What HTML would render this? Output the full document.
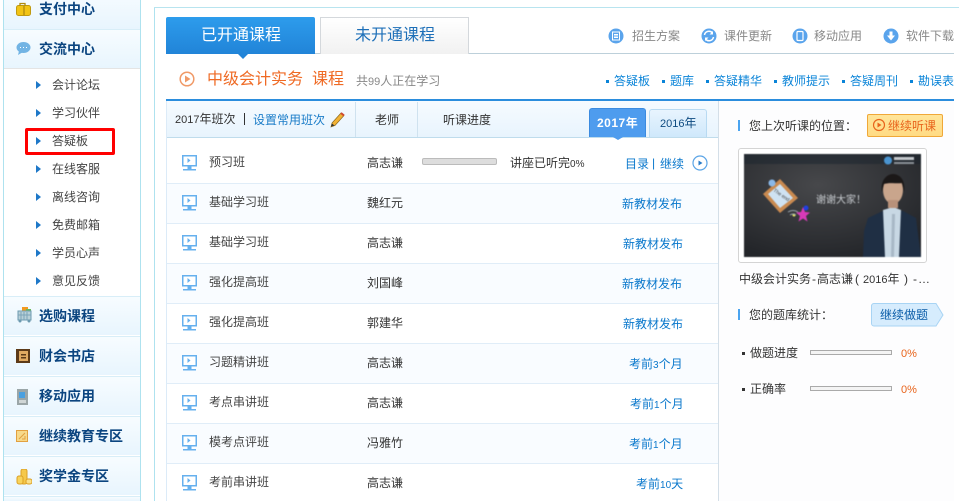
<!DOCTYPE html>
<html lang="zh"><head><meta charset="utf-8"><title>课程</title>
<style>
html,body{margin:0;padding:0;background:#fff}
#p{position:relative;width:959px;height:501px;overflow:hidden;background:#fff;font:12px/14px "Liberation Sans","WenQuanYi Zen Hei","Noto Sans CJK SC",sans-serif;color:#333}
#p div,#p span.t,#p svg{position:absolute}
.t{position:absolute;white-space:nowrap;line-height:14px}
.d{font-style:normal;font-size:11px}
.h{left:4px;width:136px;height:38px;background:linear-gradient(#f7fcff,#e8f5fe);border-top:1px solid #d8eef8}
.ht{left:39px;font-size:14px;font-weight:bold;color:#0b4580;line-height:16px}
.m{left:52px;color:#444}
.a{width:0;height:0;left:36px;border-left:5px solid #1e78c8;border-top:4px solid transparent;border-bottom:4px solid transparent}
.r{left:167px;width:551px;height:39px;border-bottom:1px solid #e0edf8}
.alt{background:#f9fcff}
.n{left:209px;color:#444}.te{left:367px;color:#333}.l{color:#0a78cc}
.q{color:#0a84d8}.s{width:3px;height:3px;background:#0a84d8;top:80px}
.g{color:#888}
</style></head><body><div id="p">

<div style="left:3px;top:0;width:1px;height:501px;background:#aee2ef"></div>
<div style="left:140px;top:0;width:1px;height:501px;background:#aee2ef"></div>
<div style="left:154px;top:7px;width:1px;height:494px;background:#aee2ef"></div>
<div style="left:154px;top:7px;width:805px;height:1px;background:#b8e4ef"></div>

<div class="h" style="top:-10px;height:38px"></div>
<div class="h" style="top:29px;height:38px;border-bottom:1px solid #e4e4e4"></div>
<div class="h" style="top:296px"></div><div class="h" style="top:336px"></div><div class="h" style="top:376px"></div><div class="h" style="top:416px"></div><div class="h" style="top:456px"></div><div class="h" style="top:496px;height:4px"></div>

<span class="t ht" style="top:1px">支付中心</span>
<span class="t ht" style="top:41px">交流中心</span>
<span class="t ht" style="top:308px">选购课程</span>
<span class="t ht" style="top:348px">财会书店</span>
<span class="t ht" style="top:388px">移动应用</span>
<span class="t ht" style="top:428px">继续教育专区</span>
<span class="t ht" style="top:468px">奖学金专区</span>

<svg style="left:16px;top:2px" width="15" height="14"><rect x=".5" y="3.500" width="14" height="10" rx="2" fill="#f2c415" stroke="#c09a10"/><path d="M4 4V1.500h5V4M8 4v9" fill="none" stroke="#b08a10" stroke-width="1.300"/></svg>
<svg style="left:16px;top:42px" width="15" height="13"><ellipse cx="7.500" cy="5.500" rx="7" ry="5.500" fill="#72b4e4"/><path d="M3 9l-1 4 5-3z" fill="#72b4e4"/><path d="M4 5.500h1M7 5.500h1M10 5.500h1" stroke="#fff"/></svg>
<svg style="left:17px;top:307px" width="15" height="16"><rect x="5" y="0" width="6" height="5" fill="#f29a20"/><rect x="9" y="2" width="5" height="3" fill="#6cb85a"/><rect x="1" y="4" width="13" height="9" fill="#b8d0d8" stroke="#6c9ab0"/><path d="M4 5v8M7 5v8M10 5v8M1 8h13" stroke="#7ca4b8"/><circle cx="3" cy="14" r="1.500" fill="#6c9ab0"/><circle cx="12" cy="14" r="1.500" fill="#6c9ab0"/></svg>
<svg style="left:16px;top:349px" width="14" height="14"><rect width="14" height="14" fill="#5c3a18"/><rect x="3" y="2" width="9" height="10" fill="#e0aa62"/><rect x="5" y="5" width="5" height="1.500" fill="#5c3a18"/><rect x="5" y="8" width="5" height="1.500" fill="#5c3a18"/></svg>
<svg style="left:17px;top:389px" width="11" height="16"><rect width="11" height="16" fill="#9ba6a8"/><rect x="2" y="3" width="6" height="6" fill="#4aa0e0"/><rect x="2" y="11" width="7" height="3" fill="#d0d6d6"/></svg>
<svg style="left:16px;top:430px" width="12" height="12"><rect x=".5" y=".5" width="11" height="11" fill="#f7d98a" stroke="#e2a040"/><path d="M3 9l6-6M6 9h3V6" stroke="#e2a040" fill="none"/></svg>
<svg style="left:16px;top:469px" width="16" height="16"><rect x="5" y="0" width="6" height="15" rx="2" fill="#f5c84a" stroke="#dca024"/><rect x="1" y="7" width="6" height="8" rx="2" fill="#f8d45c" stroke="#dca024"/><rect x="10" y="10" width="6" height="5" rx="2" fill="#fbe08a" stroke="#dca024"/></svg>

<div class="a" style="top:81px"></div><span class="t m" style="top:78px">会计论坛</span>
<div class="a" style="top:109px"></div><span class="t m" style="top:106px">学习伙伴</span>
<div class="a" style="top:137px"></div><span class="t m" style="top:134px">答疑板</span>
<div class="a" style="top:165px"></div><span class="t m" style="top:162px">在线客服</span>
<div class="a" style="top:193px"></div><span class="t m" style="top:190px">离线咨询</span>
<div class="a" style="top:221px"></div><span class="t m" style="top:218px">免费邮箱</span>
<div class="a" style="top:249px"></div><span class="t m" style="top:246px">学员心声</span>
<div class="a" style="top:277px"></div><span class="t m" style="top:274px">意见反馈</span>
<div style="left:25px;top:128px;width:84px;height:21px;border:3px solid #f00;border-radius:2px"></div>

<div style="left:166px;top:53px;width:788px;height:1px;background:#bdd0da"></div>
<div style="left:166px;top:17px;width:149px;height:37px;background:linear-gradient(#2d9cec,#2184d8);border-radius:2px 2px 0 0"></div>
<div style="left:238px;top:54px;width:0;height:0;border:5px solid transparent;border-top:5px solid #2184d8;border-bottom:0"></div>
<div style="left:320px;top:17px;width:147px;height:36px;background:linear-gradient(#fff,#f1f1f1);border:1px solid #d4d8dc;border-bottom:0"></div>
<span class="t" style="left:201px;top:27px;font-size:16px;line-height:18px;color:#fff">已开通课程</span>
<span class="t" style="left:355px;top:27px;font-size:16px;line-height:18px;color:#1d6fb8">未开通课程</span>

<svg style="left:608px;top:28px" width="16" height="16"><circle cx="8" cy="8" r="7.500" fill="#5aa4ec"/><rect x="4.500" y="4" width="7" height="8" fill="none" stroke="#fff"/><path d="M6 6.500h4M6 8h4M6 9.500h4" stroke="#fff"/></svg>
<span class="t g" style="left:632px;top:29px">招生方案</span>
<svg style="left:701px;top:28px" width="16" height="16"><circle cx="8" cy="8" r="7.500" fill="#5aa4ec"/><path d="M3.500 7a4.500 4.500 0 0 1 8-2M12.500 9a4.500 4.500 0 0 1-8 2" fill="none" stroke="#fff" stroke-width="1.500"/><path d="M12 3v3.500H8.500zM4 13V9.500h3.500z" fill="#fff"/></svg>
<span class="t g" style="left:724px;top:29px">课件更新</span>
<svg style="left:792px;top:28px" width="16" height="16"><circle cx="8" cy="8" r="7.500" fill="#5aa4ec"/><rect x="5" y="3.500" width="6" height="9" rx="1" fill="none" stroke="#fff" stroke-width="1.200"/></svg>
<span class="t g" style="left:814px;top:29px">移动应用</span>
<svg style="left:883px;top:28px" width="16" height="16"><circle cx="8" cy="8" r="7.500" fill="#5aa4ec"/><path d="M6.500 3.500h3v4H12l-4 5-4-5h2.500z" fill="#fff"/></svg>
<span class="t g" style="left:906px;top:29px">软件下载</span>

<svg style="left:179px;top:71px" width="16" height="16"><circle cx="8" cy="8" r="6.800" fill="none" stroke="#f09a68" stroke-width="1.500"/><path d="M6 4.500v7l5.500-3.500z" fill="#f09a68"/></svg>
<span class="t" style="left:207px;top:71px;font-size:16px;line-height:18px;color:#ef6a24">中级会计实务</span>
<span class="t" style="left:312px;top:71px;font-size:16px;line-height:18px;color:#ef6a24">课程</span>
<span class="t" style="left:356px;top:74px;color:#888">共<i class="d">99</i>人正在学习</span>

<div class="s" style="left:606px"></div><span class="t q" style="left:614px;top:74px">答疑板</span>
<div class="s" style="left:662px"></div><span class="t q" style="left:670px;top:74px">题库</span>
<div class="s" style="left:706px"></div><span class="t q" style="left:714px;top:74px">答疑精华</span>
<div class="s" style="left:774px"></div><span class="t q" style="left:782px;top:74px">教师提示</span>
<div class="s" style="left:842px"></div><span class="t q" style="left:850px;top:74px">答疑周刊</span>
<div class="s" style="left:910px"></div><span class="t q" style="left:918px;top:74px">勘误表</span>

<div style="left:166px;top:99px;width:788px;height:2px;background:#2b8ddd"></div>
<div style="left:166px;top:101px;width:552px;height:36px;background:linear-gradient(#f6fbff,#e8f4fd);border-bottom:1px solid #bfdcec"></div>
<div style="left:166px;top:101px;width:1px;height:400px;background:#dcebf8"></div>
<div style="left:718px;top:101px;width:1px;height:400px;background:#d4dfe8"></div>
<div style="left:719px;top:101px;width:235px;height:400px;background:#fdfdfe"></div>
<div style="left:355px;top:102px;width:1px;height:35px;background:#cfe2ef"></div>
<div style="left:417px;top:102px;width:1px;height:35px;background:#cfe2ef"></div>
<span class="t" style="left:175px;top:112px"><i class="d">2017</i>年班次</span>
<div style="left:244px;top:113px;width:1px;height:12px;background:#333"></div>
<span class="t" style="left:253px;top:113px;color:#1a7cc8">设置常用班次</span>
<svg style="left:329px;top:111px" width="16" height="17"><path d="M3 12L12 2l3 2.500-9 10-4 1.500z" fill="#f2b234" stroke="#8a6a20" stroke-width=".7"/><path d="M12 2l3 2.500" stroke="#d04a30" stroke-width="2"/><path d="M2 15.500l1-3 2.500 2z" fill="#333"/></svg>
<span class="t" style="left:375px;top:113px">老师</span>
<span class="t" style="left:443px;top:113px">听课进度</span>

<div style="left:589px;top:108px;width:57px;height:29px;background:#4e9cee;border:1px solid #3b8be0;border-bottom:0;border-radius:3px 3px 0 0;box-sizing:border-box"></div>
<div style="left:613px;top:137px;width:0;height:0;border:5px solid transparent;border-top:3px solid #4e9cee;border-bottom:0"></div>
<span class="t" style="left:597px;top:116px;color:#fff;font-weight:bold;letter-spacing:.5px">2017年</span>
<div style="left:649px;top:109px;width:58px;height:28px;background:linear-gradient(#e8f4fe,#cfe8fb);border:1px solid #b8daf2;border-bottom:0;border-radius:3px 3px 0 0;box-sizing:border-box"></div>
<span class="t" style="left:660px;top:116px;color:#0d4a80"><i class="d">2016</i>年</span>

<div class="r" style="top:138px;height:45px"></div>
<div class="r alt" style="top:184px"></div><div class="r" style="top:224px"></div>
<div class="r alt" style="top:264px"></div><div class="r" style="top:304px"></div>
<div class="r alt" style="top:344px"></div><div class="r" style="top:384px"></div>
<div class="r alt" style="top:424px"></div><div class="r" style="top:464px;height:37px;border-bottom:0"></div>

<svg width="0" height="0" style="left:0;top:0"><defs><g id="tv"><rect x="1.750" y="1.750" width="13.500" height="10" fill="#fff" stroke="#66b0ee" stroke-width="1.500"/><path d="M6.500 4v5l3-2.500z" fill="#66b0ee"/><rect x="6.500" y="12" width="4" height="3" fill="#66b0ee"/><rect x="2" y="15" width="13" height="1.500" fill="#66b0ee"/></g></defs></svg>
<svg style="left:181px;top:154px" width="17" height="17"><use href="#tv"/></svg>
<svg style="left:181px;top:194px" width="17" height="17"><use href="#tv"/></svg>
<svg style="left:181px;top:234px" width="17" height="17"><use href="#tv"/></svg>
<svg style="left:181px;top:274px" width="17" height="17"><use href="#tv"/></svg>
<svg style="left:181px;top:314px" width="17" height="17"><use href="#tv"/></svg>
<svg style="left:181px;top:354px" width="17" height="17"><use href="#tv"/></svg>
<svg style="left:181px;top:394px" width="17" height="17"><use href="#tv"/></svg>
<svg style="left:181px;top:434px" width="17" height="17"><use href="#tv"/></svg>
<svg style="left:181px;top:474px" width="17" height="17"><use href="#tv"/></svg>

<span class="t n" style="top:155px">预习班</span><span class="t te" style="top:156px">高志谦</span>
<span class="t n" style="top:195px">基础学习班</span><span class="t te" style="top:196px">魏红元</span>
<span class="t n" style="top:235px">基础学习班</span><span class="t te" style="top:236px">高志谦</span>
<span class="t n" style="top:275px">强化提高班</span><span class="t te" style="top:276px">刘国峰</span>
<span class="t n" style="top:315px">强化提高班</span><span class="t te" style="top:316px">郭建华</span>
<span class="t n" style="top:355px">习题精讲班</span><span class="t te" style="top:356px">高志谦</span>
<span class="t n" style="top:395px">考点串讲班</span><span class="t te" style="top:396px">高志谦</span>
<span class="t n" style="top:435px">模考点评班</span><span class="t te" style="top:436px">冯雅竹</span>
<span class="t n" style="top:475px">考前串讲班</span><span class="t te" style="top:476px">高志谦</span>

<div style="left:422px;top:158px;width:75px;height:7px;background:#ddd;border:1px solid #bbb;border-radius:2px;box-sizing:border-box"></div>
<span class="t" style="left:510px;top:156px">讲座已听完<i class="d" style="font-size:10px">0%</i></span>
<span class="t l" style="left:625px;top:157px">目录</span><span class="t l" style="left:652px;top:156px">|</span><span class="t l" style="left:660px;top:157px">继续</span>
<svg style="left:692px;top:155px" width="16" height="16"><circle cx="8" cy="8" r="7" fill="#fff" stroke="#5aa4e6" stroke-width="1.200"/><path d="M6.500 5.500v5L10.500 8z" fill="#2a7cc8"/></svg>

<span class="t l" style="left:622px;top:197px">新教材发布</span>
<span class="t l" style="left:623px;top:237px">新教材发布</span>
<span class="t l" style="left:622px;top:277px">新教材发布</span>
<span class="t l" style="left:623px;top:317px">新教材发布</span>
<span class="t l" style="left:629px;top:357px">考前<i class="d" style="font-size:10px">3</i>个月</span>
<span class="t l" style="left:630px;top:397px">考前<i class="d" style="font-size:10px">1</i>个月</span>
<span class="t l" style="left:629px;top:437px">考前<i class="d" style="font-size:10px">1</i>个月</span>
<span class="t l" style="left:636px;top:477px">考前<i class="d" style="font-size:10px">10</i>天</span>

<div style="left:738px;top:120px;width:2px;height:11px;background:#4aa4f0"></div>
<span class="t" style="left:749px;top:119px">您上次听课的位置：</span>
<div style="left:867px;top:114px;width:76px;height:23px;background:linear-gradient(#ffe59a,#ffdb84);border:1px solid #f0a838;border-radius:2px;box-sizing:border-box"></div>
<svg style="left:872px;top:118px" width="14" height="14"><circle cx="7" cy="7" r="5.500" fill="none" stroke="#e8641c" stroke-width="1.200"/><path d="M5.500 4.500v5L9.500 7z" fill="#e8641c"/></svg>
<span class="t" style="left:888px;top:119px;color:#e8641c">继续听课</span>

<div style="left:738px;top:148px;width:189px;height:115px;background:#fff;border:1px solid #d4d4d4;border-radius:3px;box-sizing:border-box"></div>
<svg style="left:744px;top:154px;filter:blur(.4px)" width="177" height="103" viewBox="0 0 177 103">
<defs><radialGradient id="bg" cx="42%" cy="30%" r="75%"><stop offset="0" stop-color="#47484b"/><stop offset="1" stop-color="#232529"/></radialGradient></defs>
<rect width="177" height="103" fill="url(#bg)"/>
<rect width="177" height="10" fill="#1e2730" opacity=".55"/>
<path d="M19 40L36 25l18 19-18 15z" fill="#c98a50"/><path d="M24 40l12-10 13 14-13 10z" fill="#cfe2f2"/>
<text x="29" y="37" font-size="5" fill="#444" transform="rotate(35 29 37)" font-family="Liberation Sans">The end</text>
<circle cx="28" cy="29" r="3.500" fill="#8ab8e8"/>
<path d="M59 53l2 5 5 .5-4 3.500 1.500 5.500-4.500-3-4.500 3 1.500-5.500-4-3.500 5-.5z" fill="#d83ab8"/><circle cx="62" cy="54" r="2.500" fill="#2040e0"/><circle cx="50" cy="61" r="1.500" fill="#e8e860"/>
<path d="M44 58q5-3 10 0M46 61q3-2 6 0" fill="none" stroke="#9aa4ac"/>
<text x="72" y="49" font-size="10" fill="#c8ccd0" font-family="Noto Sans CJK SC,sans-serif">谢谢大家！</text>
<circle cx="144" cy="6.500" r="4" fill="#4a94d0"/><rect x="150" y="3" width="20" height="3" fill="#c4c8cc"/><rect x="150" y="8" width="20" height="2" fill="#8a9096"/>
<path d="M119 103l1-26 4-13 17-8 9-1 9 2 13 7 5 39z" fill="#1f2f44"/><path d="M139 56l10-3 8 3-2 47h-14z" fill="#c8d8e4"/>
<path d="M148 60h3l-1 43h-3z" fill="#a8b8c6"/>
<ellipse cx="149" cy="36" rx="10" ry="14" fill="#c9a58c"/><rect x="144" y="46" width="10" height="8" fill="#b8917a"/><path d="M138 38c-2-13 6-18 11-18s13 4 11 18l-2-9c-5 1-12-1-18 1z" fill="#1b1818"/>
</svg>
<span class="t" style="left:739px;top:272px">中级会计实务</span><span class="t" style="left:812px;top:272px">-</span><span class="t" style="left:817px;top:272px">高志谦</span><span class="t" style="left:855px;top:272px">(</span><span class="t" style="left:863px;top:272px"><i class="d">2016</i>年</span><span class="t" style="left:904px;top:272px">)</span><span class="t" style="left:913px;top:272px">-</span><span class="t" style="left:918px;top:272px">…</span>

<div style="left:738px;top:309px;width:2px;height:11px;background:#4aa4f0"></div>
<span class="t" style="left:749px;top:308px">您的题库统计：</span>
<svg style="left:871px;top:303px" width="73" height="24"><path d="M3 .5H65L72 12l-7 11H3a2.500 2.500 0 0 1-2.500-2.500v-17A2.500 2.500 0 0 1 3 .5z" fill="#d6ecfd" stroke="#a8d4f4"/></svg>
<span class="t" style="left:880px;top:308px;color:#0a5ca8">继续做题</span>

<div style="left:742px;top:352px;width:3px;height:3px;background:#333"></div>
<span class="t" style="left:750px;top:346px">做题进度</span>
<div style="left:810px;top:350px;width:80px;height:3px;border:1px solid #aaa;background:#f4f4f4"></div>
<span class="t" style="left:901px;top:346px;color:#e8641c"><i class="d">0%</i></span>
<div style="left:742px;top:388px;width:3px;height:3px;background:#333"></div>
<span class="t" style="left:750px;top:382px">正确率</span>
<div style="left:810px;top:386px;width:80px;height:3px;border:1px solid #aaa;background:#f4f4f4"></div>
<span class="t" style="left:901px;top:382px;color:#e8641c"><i class="d">0%</i></span>

</div></body></html>
